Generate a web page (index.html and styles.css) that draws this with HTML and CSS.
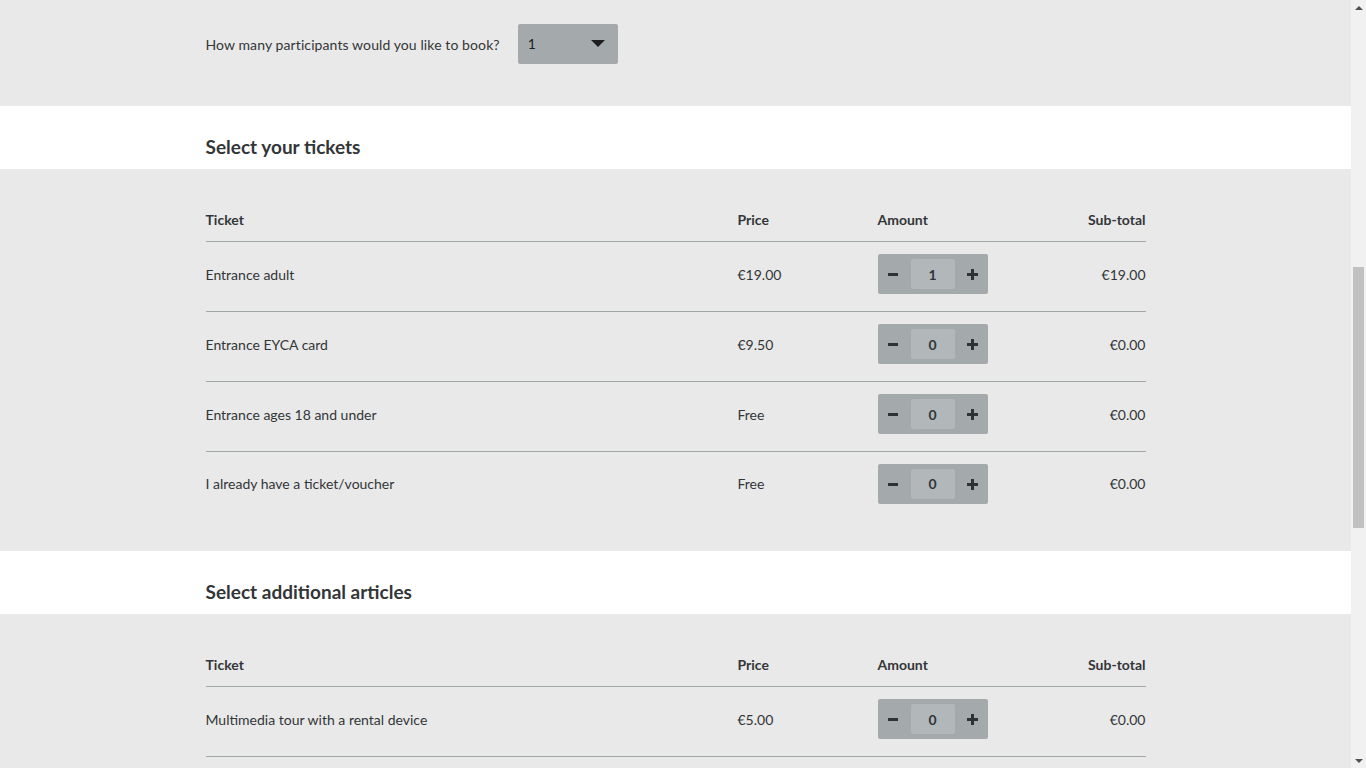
FILE: index.html
```html
<!DOCTYPE html>
<html lang="en">
<head>
<meta charset="utf-8">
<title>Tickets</title>
<link rel="stylesheet" href="styles.css">
</head>
<body>
<div class="viewport">
  <main class="page">
    <section class="band band-gray band-top">
      <div class="container participants">
        <span class="question">How many participants would you like to book?</span>
        <div class="select">
          <span class="select-value">1</span>
          <svg class="select-arrow" width="14" height="7" viewBox="0 0 14 7"><path d="M0 0H14L7 7Z" fill="#1e1e1e"/></svg>
        </div>
      </div>
    </section>

    <section class="band band-white">
      <div class="container"><h2 class="heading">Select your tickets</h2></div>
    </section>

    <section class="band band-gray band-table">
      <div class="container">
        <div class="row row-head">
          <div class="c-name">Ticket</div><div class="c-price">Price</div><div class="c-amount">Amount</div><div class="c-sub">Sub-total</div>
        </div>
        <div class="row">
          <div class="c-name">Entrance adult</div><div class="c-price">€19.00</div>
          <div class="c-amount"><div class="stepper"><span class="btn minus"></span><span class="qty">1</span><span class="btn plus"></span></div></div>
          <div class="c-sub">€19.00</div>
        </div>
        <div class="row">
          <div class="c-name">Entrance EYCA card</div><div class="c-price">€9.50</div>
          <div class="c-amount"><div class="stepper"><span class="btn minus"></span><span class="qty">0</span><span class="btn plus"></span></div></div>
          <div class="c-sub">€0.00</div>
        </div>
        <div class="row">
          <div class="c-name">Entrance ages 18 and under</div><div class="c-price">Free</div>
          <div class="c-amount"><div class="stepper"><span class="btn minus"></span><span class="qty">0</span><span class="btn plus"></span></div></div>
          <div class="c-sub">€0.00</div>
        </div>
        <div class="row row-last">
          <div class="c-name">I already have a ticket/voucher</div><div class="c-price">Free</div>
          <div class="c-amount"><div class="stepper"><span class="btn minus"></span><span class="qty">0</span><span class="btn plus"></span></div></div>
          <div class="c-sub">€0.00</div>
        </div>
      </div>
    </section>

    <section class="band band-white">
      <div class="container"><h2 class="heading">Select additional articles</h2></div>
    </section>

    <section class="band band-gray band-table">
      <div class="container">
        <div class="row row-head">
          <div class="c-name">Ticket</div><div class="c-price">Price</div><div class="c-amount">Amount</div><div class="c-sub">Sub-total</div>
        </div>
        <div class="row">
          <div class="c-name">Multimedia tour with a rental device</div><div class="c-price">€5.00</div>
          <div class="c-amount"><div class="stepper"><span class="btn minus"></span><span class="qty">0</span><span class="btn plus"></span></div></div>
          <div class="c-sub">€0.00</div>
        </div>
        <div class="row">
          <div class="c-name">&nbsp;</div><div class="c-price"></div><div class="c-amount"></div><div class="c-sub"></div>
        </div>
      </div>
    </section>
  </main>
  <div class="scrollbar">
    <span class="arrow arrow-up"></span>
    <div class="track"><div class="thumb"></div></div>
    <span class="arrow arrow-down"></span>
  </div>
</div>
</body>
</html>
```
FILE: styles.css
```css
* { box-sizing: border-box; }
html, body { margin: 0; padding: 0; }
body {
  font-family: Lato, "Open Sans", "Liberation Sans", sans-serif;
  font-size: 14px;
  color: #333638;
  background: #e9e9e9;
  height: 768px;
  overflow: hidden;
}
.viewport { display: flex; height: 768px; }
.page { flex: 1; overflow: hidden; }
.band-gray { background: #e9e9e9; }
.band-white { background: #ffffff; }
.container { width: 940px; margin: 0 auto; }

.band-top { height: 106px; padding-top: 24px; }
.participants { display: flex; align-items: center; gap: 18px; }
.question { font-size: 14px; letter-spacing: 0.1px; padding-top: 1px; }
.select {
  width: 100px; height: 40px;
  background: #a4aaac;
  border-radius: 2px;
  display: flex; align-items: center; justify-content: space-between;
  padding: 0 13px 0 10px;
  color: #1e1e1e;
}
.select-value { padding-bottom: 1px; }
.select-arrow { display: block; margin-top: -1px; }

.band-white { height: 63px; padding-top: 29px; }
.heading { margin: 0; font-size: 19px; font-weight: 700; line-height: 24px; color: #333638; }

.band-table { padding-top: 30px; padding-bottom: 30px; }
.row {
  display: grid;
  grid-template-columns: 532px 140px 110px 1fr;
  align-items: center;
  height: 70px;
  padding-bottom: 5px;
  border-bottom: 1px solid #a2a8aa;
}
.row-last { border-bottom: none; height: 69px; padding-bottom: 6px; }
.row-head { height: 43px; font-weight: 700; align-items: start; padding-top: 12px; padding-bottom: 0; }
.c-sub { text-align: right; }

.stepper {
  width: 110px; height: 40px;
  background: #a4aaac;
  border-radius: 2px;
  display: flex; align-items: center;
}
.btn { width: 33px; height: 40px; position: relative; }
.btn::before, .btn::after {
  content: ""; position: absolute; background: #2f3234;
}
.minus::before { width: 10px; height: 3px; left: 10px; top: 19px; }
.minus::after { display: none; }
.plus::before { width: 11px; height: 3px; left: 12px; top: 19px; }
.plus::after { width: 3px; height: 11px; left: 16px; top: 15px; }
.qty {
  width: 44px; height: 30px;
  background: #b2b8ba;
  border-radius: 2px;
  display: flex; align-items: center; justify-content: center;
  font-weight: 700; color: #333638;
}

.scrollbar {
  width: 15px; height: 768px;
  background: #f1f1f1;
  display: flex; flex-direction: column;
}
.arrow { height: 15px; display: flex; align-items: center; justify-content: center; }
.arrow::before { content: ""; border-left: 4px solid transparent; border-right: 4px solid transparent; }
.arrow-up::before { border-bottom: 4px solid #505050; }
.arrow-down::before { border-top: 4px solid #505050; }
.track { flex: 1; padding: 252px 2px 0 2px; }
.thumb { height: 261px; background: #c1c1c1; }
```
